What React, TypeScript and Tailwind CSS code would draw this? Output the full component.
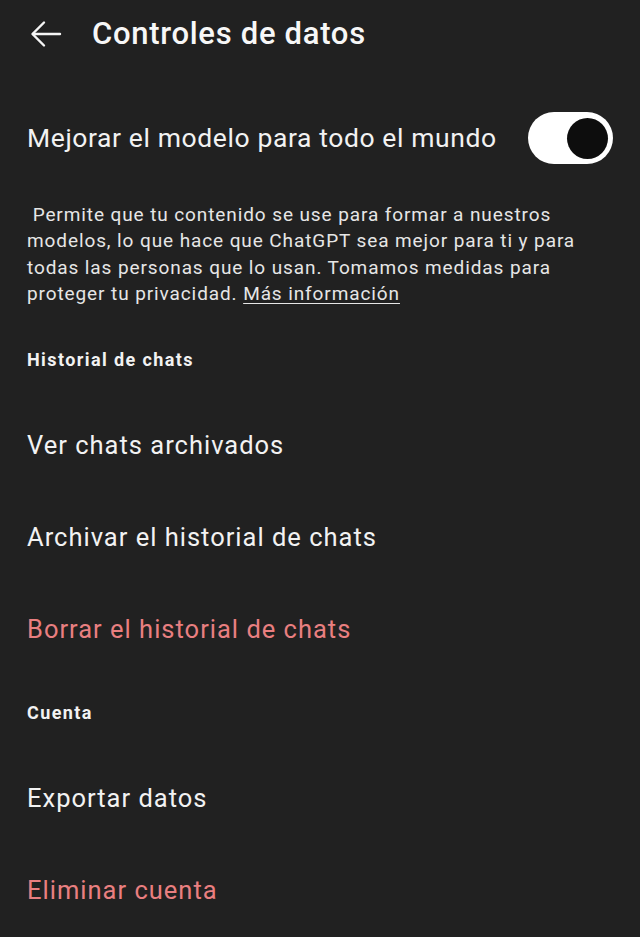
import React from "react";

const font = { fontFamily: "Roboto, 'Noto Sans', sans-serif" };

function Item({ label, danger }: { label: string; danger?: boolean }) {
  return (
    <div className="h-[92px] flex items-center">
      <span
        className={`text-[25.5px] leading-[30px] tracking-[1px] ${danger ? "text-[#e97f80]" : "text-[#f2f2f2]"}`}
      >
        {label}
      </span>
    </div>
  );
}

function SectionHeader({ label, pt }: { label: string; pt: string }) {
  return (
    <div className={`${pt} pb-[27px]`}>
      <div className="text-[18px] leading-[24px] font-bold tracking-[1.4px] text-[#f2f2f2]">{label}</div>
    </div>
  );
}

export default function App() {
  return (
    <div className="w-[640px] h-[937px] bg-[#212121] overflow-hidden" style={font}>
      <div className="h-[68px] flex items-center">
        <svg width="32" height="28" viewBox="0 0 32 28" className="ml-[30px]" fill="none" stroke="#f5f5f5" strokeWidth="2.4" strokeLinecap="round" strokeLinejoin="round">
          <path d="M30 14H3" />
          <path d="M14 2.5L2.5 14L14 25.5" />
        </svg>
        <span className="ml-[30px] text-[31px] leading-[36px] font-medium text-[#f7f7f7] tracking-[0.7px]">Controles de datos</span>
      </div>
      <div className="px-[27px]">
        <div className="mt-[36px] h-[68px] flex items-center justify-between">
          <span className="text-[26.5px] leading-[32px] tracking-[0.6px] text-[#f2f2f2]">Mejorar el modelo para todo el mundo</span>
          <div className="w-[85px] h-[52px] rounded-full bg-white flex items-center justify-end pr-[5px]">
            <div className="w-[41px] h-[41px] rounded-full bg-[#0d0d0d]" />
          </div>
        </div>
        <p className="mt-[30px] text-[19px] leading-[26.3px] tracking-[0.9px] text-[#e6e6e6] w-[586px]">
          {"\u00a0"}Permite que tu contenido se use para formar a nuestros modelos, lo que hace que ChatGPT sea mejor para ti y para todas las personas que lo usan. Tomamos medidas para proteger tu privacidad.{" "}
          <span className="underline underline-offset-[3px]">Más información</span>
        </p>
        <SectionHeader label="Historial de chats" pt="pt-[41px]" />
        <Item label="Ver chats archivados" />
        <Item label="Archivar el historial de chats" />
        <Item label="Borrar el historial de chats" danger />
        <SectionHeader label="Cuenta" pt="pt-[26px]" />
        <Item label="Exportar datos" />
        <Item label="Eliminar cuenta" danger />
      </div>
    </div>
  );
}
